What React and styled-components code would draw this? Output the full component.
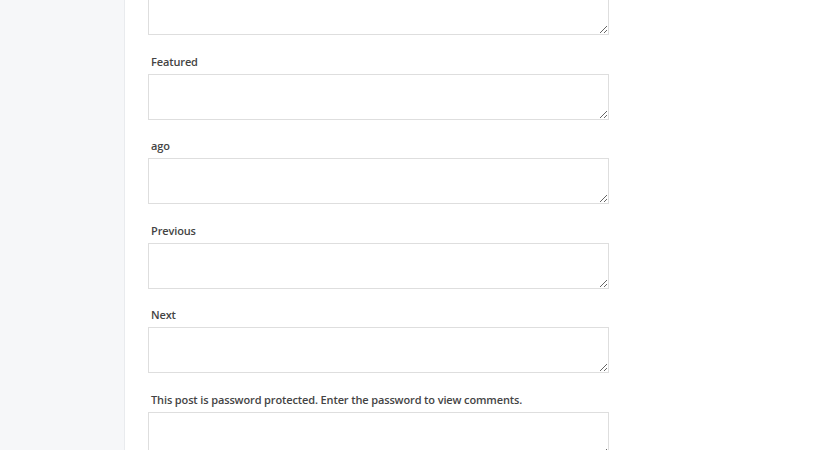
import React from "react";
import styled, { createGlobalStyle } from "styled-components";

const Global = createGlobalStyle`
  html, body { margin: 0; padding: 0; background: #fff; }
  body { font-family: "Open Sans", "Liberation Sans", sans-serif; overflow: hidden; }
`;

const Page = styled.div`
  display: flex;
  width: 830px;
  height: 450px;
  overflow: hidden;
`;

const Sidebar = styled.aside`
  width: 124px;
  flex: none;
  background: #f6f7f9;
  border-right: 1px solid #e9ebee;
`;

const Main = styled.main`
  flex: 1;
  padding-left: 23px;
`;

const FieldList = styled.div`
  display: flex;
  flex-direction: column;
  margin-top: -11px;
`;

const Field = styled.div`
  display: flex;
  flex-direction: column;
  margin-bottom: 18.5px;
`;

const Label = styled.label`
  font-size: 11px;
  font-weight: 600;
  line-height: 16px;
  letter-spacing: -0.13px;
  color: #444;
  padding-left: 3px;
  margin-bottom: 4px;
`;

const Area = styled.textarea`
  display: block;
  box-sizing: border-box;
  width: 461px;
  height: 46px;
  margin: 0;
  border: 1px solid #dedede;
  border-radius: 0;
  background: #fff;
  font-family: inherit;
  outline: none;
`;

const labels = [
  "Featured",
  "ago",
  "Previous",
  "Next",
  "This post is password protected. Enter the password to view comments.",
];

export default function App() {
  return (
    <Page>
      <Global />
      <Sidebar />
      <Main>
        <FieldList>
          <Field>
            <Area />
          </Field>
          {labels.map((l) => (
            <Field key={l}>
              <Label>{l}</Label>
              <Area />
            </Field>
          ))}
        </FieldList>
      </Main>
    </Page>
  );
}
